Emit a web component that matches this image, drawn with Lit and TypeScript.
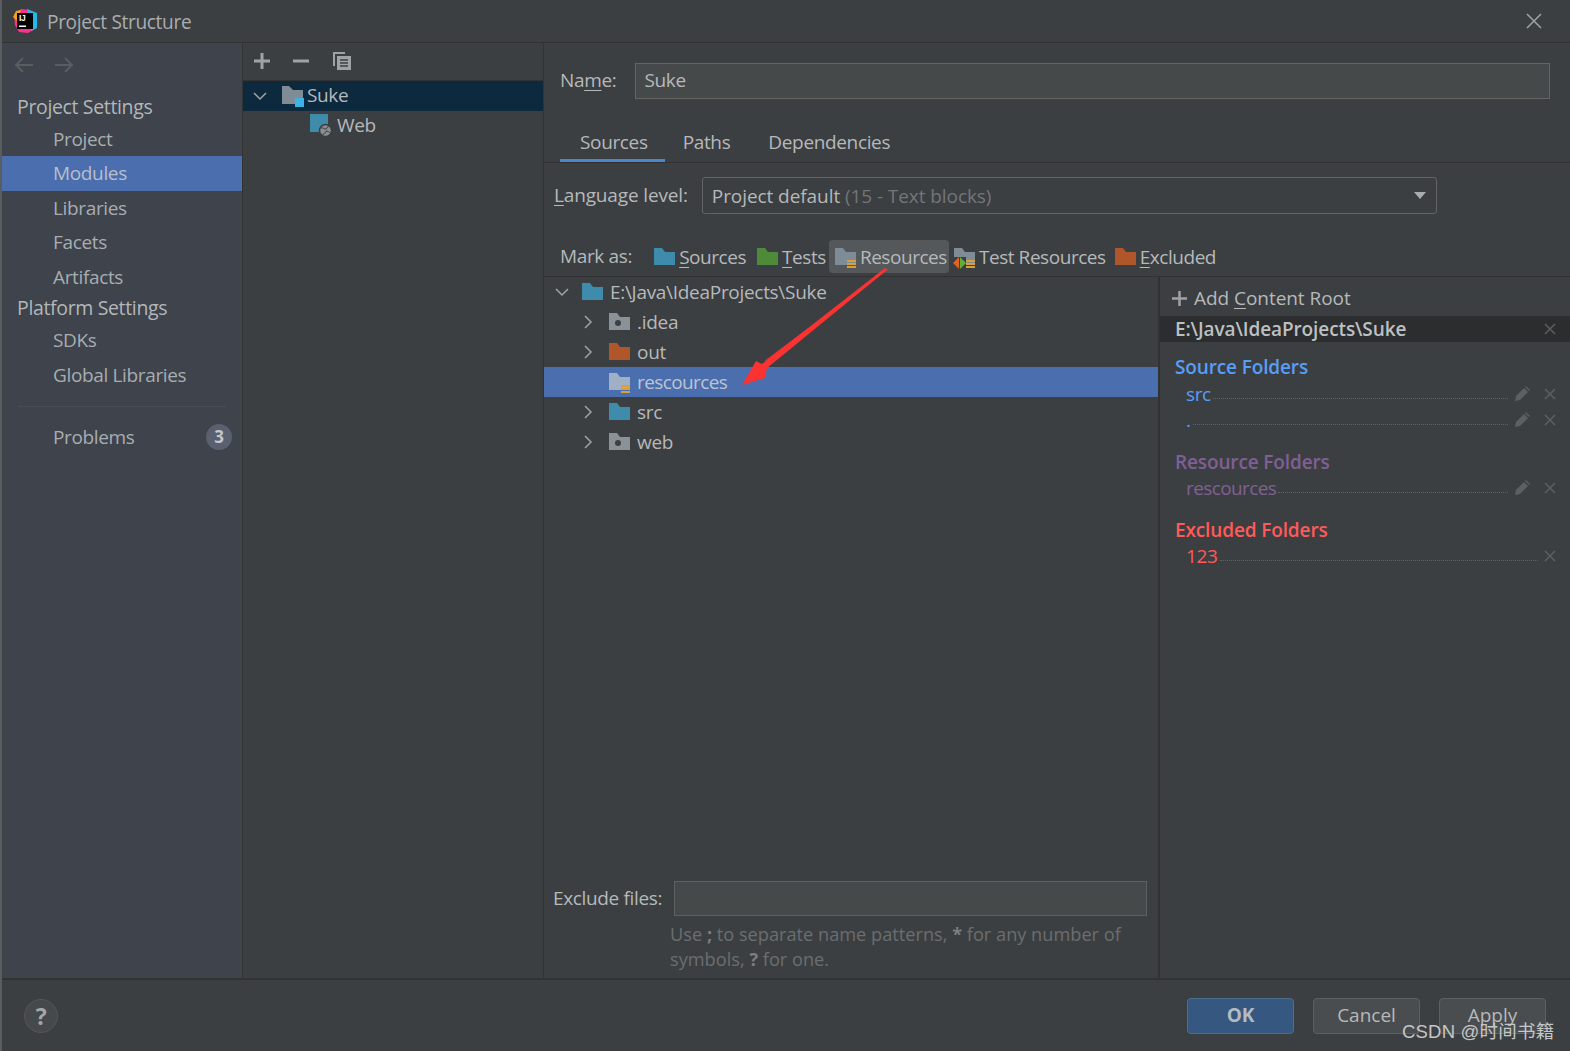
import { LitElement, html, css, svg } from 'lit';
import { customElement } from 'lit/decorators.js';

const folder = (color: string, extra = svg``) => html`<svg class="ico" width="24" height="20" viewBox="0 0 24 20">
  <path d="M1 1h8l3 4h10v13H1z" fill=${color}></path>${extra}</svg>`;

const stripes = svg`<path d="M13 13h9v2h-9zM13 16h9v2h-9zM13 19h9v2h-9z" fill="#d99f3c"></path>`;
const dot = svg`<circle cx="10" cy="11" r="3" fill="#3c3f41"></circle>`;
const testMark = svg`<path d="M0 10h13v12H0z" fill="#3c3f41"></path><path d="M0 16l6-6v12z" fill="#e0641c"></path><path d="M7 10l6 6-6 6z" fill="#5fb03a"></path>`;

const x = html`<svg class="act" width="12" height="12" viewBox="0 0 12 12"><path d="M1 1l10 10M11 1L1 11" stroke="#5d6061" stroke-width="1.500"></path></svg>`;
const pen = html`<svg class="act" width="16" height="16" viewBox="0 0 16 16"><path d="M1 15l1-5 8-8 4 4-8 8zM11 1l1-1 4 4-1 1z" fill="#5d6061"></path></svg>`;
const chevR = html`<svg class="chev" width="14" height="14" viewBox="0 0 14 14"><path d="M4 1l6 6-6 6" fill="none" stroke="#a0a3a5" stroke-width="1.500"></path></svg>`;
const chevD = html`<svg class="chev" width="14" height="14" viewBox="0 0 14 14"><path d="M1 4l6 6 6-6" fill="none" stroke="#a0a3a5" stroke-width="1.500"></path></svg>`;

@customElement('app-root')
export class AppRoot extends LitElement {
  static styles = css`
    :host {
      display: block;
      width: 1570px;
      height: 1051px;
      overflow: hidden;
      position: relative;
      background: #3c3f41;
      color: #b5b9bb;
      font-family: 'Open Sans', 'Noto Sans', sans-serif;
      font-size: 19px;
      letter-spacing: -0.35px;
    }
    svg { display: block; flex: none; }
    .ico { overflow: visible; }
    u { text-underline-offset: 3px; text-decoration-thickness: 1px; }

    .dialog {
      height: 1051px;
      display: grid;
      grid-template-rows: 43px 1fr 71px;
      border-left: 2px solid #5a5d5f;
      box-sizing: border-box;
    }

    .title {
      display: flex;
      align-items: center;
      gap: 10px;
      padding-left: 11px;
      padding-right: 28px;
      border-bottom: 1px solid #323232;
      font-size: 19.100px;
      color: #a9adaf;
    }
    .title span { margin-top: 2px; }
    .close { margin-left: auto; }

    .body {
      display: grid;
      grid-template-columns: 241px 301px 1fr;
      border-bottom: 2px solid #313335;
      min-height: 0;
    }

    .side {
      background: #3e434c;
      border-right: 1px solid #323232;
      display: flex;
      flex-direction: column;
    }
    .nav { display: flex; gap: 20px; padding: 13px 12px 0; height: 26px; }
    .head { height: 29px; line-height: 27px; padding-left: 15px; font-size: 19.500px; color: #b3b7ba; }
    .head.first { margin-top: 10.500px; }
    .item { height: 34.500px; line-height: 34px; padding-left: 51px; font-size: 19px; color: #a8adb1; }
    .item.sel { background: #4b6eaf; color: #b6bfcc; }
    .sep { height: 1px; background: #4a4d50; margin: 14px 16px 13px 16px; }
    .problems { display: flex; align-items: center; justify-content: space-between; padding-right: 10px; }
    .badge {
      width: 26px; height: 26px; border-radius: 50%;
      background: #5a6070; color: #c4c7ca;
      font-weight: 700; font-size: 17px; line-height: 26px; text-align: center;
    }

    .mid { border-right: 1px solid #323232; }
    .tools { display: flex; align-items: center; gap: 23px; height: 35px; padding: 0 0 2px 11px; border-bottom: 1px solid #323232; }
    .mrow { display: flex; align-items: center; height: 30px; font-size: 19px; }
    .mrow span { margin: -2px 0 0 2px; }
    .mrow.sel { background: #0d293e; padding-left: 10px; }
    .mrow.sel .chev { margin-right: 14px; }
    .mrow.web { padding-left: 67px; height: 29px; }
    .mrow.web span { margin-left: 3px; }

    .main { display: flex; flex-direction: column; min-width: 0; min-height: 0; }
    .name { display: flex; align-items: center; padding: 20px 20px 0 16px; gap: 19px; }
    .name > span { margin-top: -2px; }
    .field {
      background: #45494a;
      border: 1px solid #646464;
      box-sizing: content-box;
      display: flex;
      align-items: center;
      padding: 0 0 2px 8px;
      height: 32px;
      flex: 1;
    }
    .tabs { display: flex; height: 63px; align-items: flex-end; padding-left: 16px; border-bottom: 1px solid #323232; }
    .tab { height: 37px; line-height: 34px; padding: 0 17px 0 20px; box-sizing: border-box; }
    .tab.on { border-bottom: 3px solid #4a88c7; }
    .tab + .tab { padding: 0 19px 0 18px; }
    .tab + .tab + .tab { padding: 0 19px; }
    .lang { display: flex; align-items: center; padding: 14px 0 0 10px; gap: 14px; }
    .lang > span { letter-spacing: -0.15px; margin-top: -2px; }
    .select {
      width: 714px; height: 35px; box-sizing: content-box;
      display: flex; align-items: center; justify-content: space-between;
      padding: 0 10px 0 9px;
      border: 1px solid #646464; border-radius: 3px;
      letter-spacing: -0.07px;
    }
    .dim { color: #727678; }
    .mark {
      display: flex; align-items: center;
      height: 33px; padding: 26px 0 3px 16px;
      border-bottom: 1px solid #323232;
      letter-spacing: -0.45px;
    }
    .mark > span:first-child { margin-right: 21px; letter-spacing: -0.35px; margin-top: -1px; }
    .mk { display: flex; align-items: center; gap: 2px; height: 33px; }
    .mk.on { background: #54585a; border-radius: 4px; padding: 0 2px 0 5px; margin: 0 4px 0 3px; }
    .mk.tests { margin-left: 10px; }
    .mk.exc { margin-left: 8px; }

    .split { flex: 1; display: grid; grid-template-columns: 616px 1fr; min-height: 0; }
    .left { display: flex; flex-direction: column; border-right: 2px solid #323232; min-height: 0; }
    .tree { flex: 1; letter-spacing: -0.3px; }
    .row { height: 30px; display: flex; align-items: center; gap: 5px; padding-left: 37px; }
    .row .chev { margin-right: 8px; }
    .row.root { padding-left: 11px; }
    .row.root .chev { margin-right: 7px; }
    .row.sel { background: #4b6eaf; padding-left: 64px; color: #bcc4cf; letter-spacing: -0.6px; }
    .exclude { display: flex; align-items: center; gap: 12px; padding-left: 9px; }
    .exclude span { margin-top: -2px; }
    .exclude .box { margin-right: 11px; height: 33px; flex: 1; border: 1px solid #5e6060; background: #45494a; }
    .hint { padding: 6px 20px 6px 126px; line-height: 25px; color: #6a6e70; font-size: 18.200px; letter-spacing: 0; }
    .hint b { color: #7a7e80; }

    .roots { display: flex; flex-direction: column; }
    .add { display: flex; align-items: center; gap: 7px; height: 39px; padding: 3px 0 0 12px; box-sizing: border-box; letter-spacing: -0.05px; }
    .rootbar {
      height: 26px; background: #2b2d2e; display: flex; align-items: center;
      justify-content: space-between; padding: 0 14px 0 15px;
      font-weight: 600; color: #bdc0c2; font-size: 19px; letter-spacing: -0.1px;
    }
    .group { font-weight: 600; font-size: 19px; padding-left: 15px; line-height: 27px; letter-spacing: -0.13px; }
    .group.src { margin-top: 11.500px; color: #589df6; }
    .group.res { margin-top: 15.750px; color: #805f95; }
    .group.exc { margin-top: 16.250px; color: #ff5a5a; }
    .f { display: flex; align-items: center; height: 26.500px; padding: 0 14px 0 26px; }
    .f i { flex: 1; align-self: center; margin: 9px 4px 0 2px; border-bottom: 1px dotted #5e6264; }
    .f .act + .act { margin-left: 14px; }
    .f .act:first-of-type { margin-left: 2px; }
    .src-t { color: #589df6; }
    .res-t { color: #805f95; margin-top: -2px; letter-spacing: -0.6px; }
    .exc-t { color: #ff5a5a; margin-top: -1px; }

    .foot { display: flex; align-items: center; padding: 0 24px 0 22px; gap: 19px; }
    .help {
      width: 32px; height: 32px; border: 1px solid #555; border-radius: 50%;
      background: #46494b; color: #a4a7a9; font-weight: 700; text-align: center; line-height: 32px;
      margin-right: auto; font-size: 23px;
    }
    .btn {
      width: 105px; height: 34px; line-height: 33px; text-align: center;
      border: 1px solid #5e6060; border-radius: 4px; background: #4a4d4f; color: #b6b9bb;
      letter-spacing: 0;
    }
    .btn.ok { background: #365880; border-color: #4c708c; color: #b3bbc3; font-weight: 700; }

    .arrow { position: absolute; left: 735px; top: 268px; pointer-events: none; }
    .mark-text {
      position: absolute; left: 1402px; top: 1017px;
      color: #c4c6c7; font: 18.500px 'Liberation Sans', 'Noto Sans CJK SC', sans-serif; letter-spacing: 0.2px;
    }
  `;

  render() {
    return html`
      <div class="dialog">
        <div class="title">
          <svg width="24" height="24" viewBox="0 0 24 24">
            <path d="M1 6l7-6 8 1 8 4v14l-9 5-9-1-4-7z" fill="#fc318c"></path>
            <path d="M14 0l10 4v15l-6 3z" fill="#21b9ea"></path>
            <path d="M0 8l3-6 5-1-4 11z" fill="#f9a01b"></path>
            <path d="M4 4h16v16H4z" fill="#000"></path>
            <text x="6" y="12" fill="#fff" font-size="8.500" font-weight="700" font-family="Liberation Sans">IJ</text>
            <path d="M6 16.500h7v1.500H6z" fill="#fff"></path>
          </svg>
          <span>Project Structure</span>
          <svg class="close" width="16" height="16" viewBox="0 0 16 16"><path d="M1 1l14 14M15 1L1 15" stroke="#a0a3a5" stroke-width="1.500"></path></svg>
        </div>

        <div class="body">
          <div class="side">
            <div class="nav">
              <svg width="20" height="18" viewBox="0 0 20 18"><path d="M19 9H2M9 2L2 9l7 7" fill="none" stroke="#5a5e62" stroke-width="2"></path></svg>
              <svg width="20" height="18" viewBox="0 0 20 18"><path d="M1 9h17M11 2l7 7-7 7" fill="none" stroke="#5a5e62" stroke-width="2"></path></svg>
            </div>
            <div class="head first">Project Settings</div>
            <div class="item">Project</div>
            <div class="item sel">Modules</div>
            <div class="item">Libraries</div>
            <div class="item">Facets</div>
            <div class="item">Artifacts</div>
            <div class="head">Platform Settings</div>
            <div class="item">SDKs</div>
            <div class="item">Global Libraries</div>
            <div class="sep"></div>
            <div class="item problems"><span>Problems</span><span class="badge">3</span></div>
          </div>

          <div class="mid">
            <div class="tools">
              <svg width="16" height="16" viewBox="0 0 16 16"><path d="M8 0v16M0 8h16" stroke="#a0a3a5" stroke-width="3"></path></svg>
              <svg width="16" height="16" viewBox="0 0 16 16"><path d="M0 8h16" stroke="#a0a3a5" stroke-width="3"></path></svg>
              <svg width="20" height="20" viewBox="0 0 20 20"><path d="M1 1h12v2H3v12H1z" fill="#a0a3a5"></path><path d="M5 5h14v14H5z" fill="#a0a3a5"></path><path d="M8 9h8M8 12h8M8 15h8" stroke="#3c3f41" stroke-width="1.500"></path></svg>
            </div>
            <div class="mrow sel">
              ${chevD}
              <svg width="24" height="22" viewBox="0 0 24 22"><path d="M1 1h7l4 4h10v14H1z" fill="#7f8b95"></path><path d="M14 13h9v9h-9z" fill="#3db3e4"></path></svg>
              <span>Suke</span>
            </div>
            <div class="mrow web">
              <svg width="24" height="24" viewBox="0 0 24 24"><path d="M0 0h18v18H0z" fill="#3f8bab"></path><circle cx="15.500" cy="16.500" r="6" fill="#8a8f93" stroke="#3c3f41" stroke-width="1.500"></circle><path d="M11 14c3-1 3 2 5 1s1-3 3-3M13 21c0-3 4-1 3-4 2 0 3 1 4 2" stroke="#3c3f41" fill="none"></path></svg>
              <span>Web</span>
            </div>
          </div>

          <div class="main">
            <div class="name"><span>Na<u>m</u>e:</span><div class="field">Suke</div></div>
            <div class="tabs"><div class="tab on">Sources</div><div class="tab">Paths</div><div class="tab">Dependencies</div></div>
            <div class="lang">
              <span><u>L</u>anguage level:</span>
              <div class="select">
                <span>Project default <span class="dim">(15 - Text blocks)</span></span>
                <svg width="12" height="7" viewBox="0 0 12 7"><path d="M0 0h12L6 7z" fill="#a9adaf"></path></svg>
              </div>
            </div>
            <div class="mark">
              <span>Mark as:</span>
              <div class="mk">${folder('#3f8bab')}<span><u>S</u>ources</span></div>
              <div class="mk tests">${folder('#4e8a3a')}<span><u>T</u>ests</span></div>
              <div class="mk on">${folder('#7f8b95', stripes)}<span>Resources</span></div>
              <div class="mk">${folder('#7f8b95', svg`${testMark}${stripes}`)}<span>Test Resources</span></div>
              <div class="mk exc">${folder('#b0562b')}<span><u>E</u>xcluded</span></div>
            </div>

            <div class="split">
              <div class="left">
                <div class="tree">
                  <div class="row root">${chevD}${folder('#3f8bab')}<span>E:\\Java\\IdeaProjects\\Suke</span></div>
                  <div class="row">${chevR}${folder('#8a9298', dot)}<span>.idea</span></div>
                  <div class="row">${chevR}${folder('#b0562b')}<span>out</span></div>
                  <div class="row sel">${folder('#9fb0c4', stripes)}<span>rescources</span></div>
                  <div class="row">${chevR}${folder('#3f8bab')}<span>src</span></div>
                  <div class="row">${chevR}${folder('#8a9298', dot)}<span>web</span></div>
                </div>
                <div class="exclude"><span>Exclude files:</span><div class="box"></div></div>
                <div class="hint">
                  <div>Use <b>;</b> to separate name patterns, <b>*</b> for any number of</div>
                  <div>symbols, <b>?</b> for one.</div>
                </div>
              </div>
              <div class="roots">
                <div class="add">
                  <svg width="15" height="15" viewBox="0 0 15 15"><path d="M7.500 0v15M0 7.500h15" stroke="#a0a3a5" stroke-width="2.500"></path></svg>
                  <span>Add <u>C</u>ontent Root</span>
                </div>
                <div class="rootbar"><span>E:\\Java\\IdeaProjects\\Suke</span>${x}</div>
                <div class="group src">Source Folders</div>
                <div class="f src-t"><span>src</span><i></i>${pen}${x}</div>
                <div class="f src-t"><span>.</span><i></i>${pen}${x}</div>
                <div class="group res">Resource Folders</div>
                <div class="f res-t"><span>rescources</span><i></i>${pen}${x}</div>
                <div class="group exc">Excluded Folders</div>
                <div class="f exc-t"><span>123</span><i></i>${x}</div>
              </div>
            </div>
          </div>
        </div>

        <div class="foot">
          <div class="help">?</div>
          <div class="btn ok">OK</div>
          <div class="btn">Cancel</div>
          <div class="btn">Apply</div>
        </div>
      </div>

      <svg class="arrow" width="160" height="125" viewBox="0 0 160 125">
        <path d="M153 1L30 93" stroke="#ff3030" stroke-width="1" fill="none"></path>
        <path d="M152 2L32 100l-2 10L7 117l14-24 6 3L150 0z" fill="#f93232"></path>
      </svg>
      <div class="mark-text">CSDN @时间书籍</div>
    `;
  }
}
